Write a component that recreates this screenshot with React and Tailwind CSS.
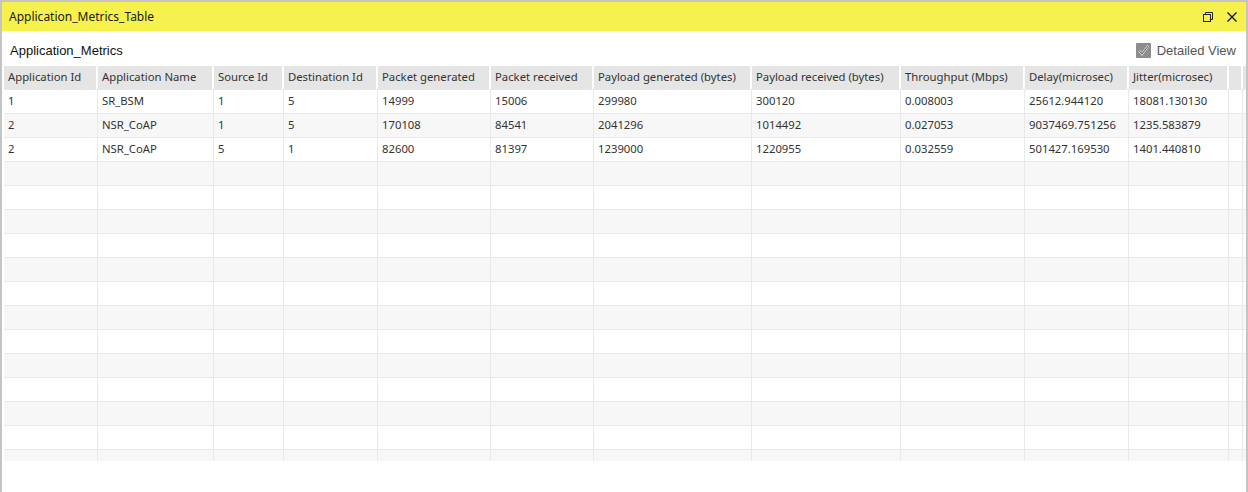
import React from 'react';

const columns = [
  { key: 'appId', label: 'Application Id', width: 94 },
  { key: 'appName', label: 'Application Name', width: 116 },
  { key: 'src', label: 'Source Id', width: 70 },
  { key: 'dst', label: 'Destination Id', width: 94 },
  { key: 'pktGen', label: 'Packet generated', width: 113 },
  { key: 'pktRecv', label: 'Packet received', width: 103 },
  { key: 'payGen', label: 'Payload generated (bytes)', width: 158 },
  { key: 'payRecv', label: 'Payload received (bytes)', width: 149 },
  { key: 'thr', label: 'Throughput (Mbps)', width: 124 },
  { key: 'delay', label: 'Delay(microsec)', width: 104 },
  { key: 'jitter', label: 'Jitter(microsec)', width: 100 },
  { key: 'filler', label: '', width: 14 },
];

const rows = [
  { appId: '1', appName: 'SR_BSM', src: '1', dst: '5', pktGen: '14999', pktRecv: '15006', payGen: '299980', payRecv: '300120', thr: '0.008003', delay: '25612.944120', jitter: '18081.130130' },
  { appId: '2', appName: 'NSR_CoAP', src: '1', dst: '5', pktGen: '170108', pktRecv: '84541', payGen: '2041296', payRecv: '1014492', thr: '0.027053', delay: '9037469.751256', jitter: '1235.583879' },
  { appId: '2', appName: 'NSR_CoAP', src: '5', dst: '1', pktGen: '82600', pktRecv: '81397', payGen: '1239000', payRecv: '1220955', thr: '0.032559', delay: '501427.169530', jitter: '1401.440810' },
];

const EMPTY_ROWS = 13;

const cellFont = { fontFamily: '"Noto Sans", "Segoe UI", sans-serif' };

const RestoreIcon = () => (
  <svg width="10" height="10" viewBox="0 0 10 10" fill="none" stroke="#222" strokeWidth="1">
    <rect x="0.5" y="2.5" width="7" height="7" />
    <path d="M2.5 2.5V0.5H9.5V7.5H7.5" />
  </svg>
);

const CloseIcon = () => (
  <svg width="10" height="10" viewBox="0 0 10 10" stroke="#111" strokeWidth="1.3">
    <path d="M0.5 0.5L9.5 9.5M9.5 0.5L0.5 9.5" />
  </svg>
);

const CheckBox = () => (
  <svg width="15" height="15" viewBox="0 0 15 15">
    <rect x="0" y="0" width="15" height="15" rx="1" fill="#8c8c8c" />
    <path d="M3 7.5L6 11L12.5 2.5" fill="none" stroke="#d9d9d9" strokeWidth="2.4" />
    <path d="M3 7.5L6 11L12.5 2.5" fill="none" stroke="#5a5a5a" strokeWidth="1" />
  </svg>
);

export default function App() {
  return (
    <div className="w-[1248px] h-[492px] bg-white border-t-2 border-x-2 border-[#c4c4c4] flex flex-col overflow-hidden">
      {/* title bar */}
      <div className="h-[29px] bg-[#f6f14c] flex items-center justify-between pl-[7px] pr-[9px] shrink-0">
        <span className="text-[12px] text-[#1a1a1a]" style={cellFont}>Application_Metrics_Table</span>
        <div className="flex items-center gap-[14px]">
          <RestoreIcon />
          <CloseIcon />
        </div>
      </div>

      {/* heading */}
      <div className="h-[35px] flex items-center justify-between pl-[8px] pr-[10px] pt-[4px] shrink-0" style={{ fontFamily: '"Liberation Sans", Arial, sans-serif' }}>
        <span className="text-[13px] text-[#111]">Application_Metrics</span>
        <label className="flex items-center gap-[6px] text-[13px] text-[#555]">
          <CheckBox />
          Detailed View
        </label>
      </div>

      {/* table */}
      <div className="pl-[2px] h-[395px] overflow-hidden shrink-0" style={cellFont}>
        <div className="flex h-[23px] bg-[#e5e5e5] text-[11.3px] text-[#333]">
          {columns.map((c) => (
            <div
              key={c.key}
              className="flex items-center pl-[4px] border-r-2 border-white whitespace-nowrap shrink-0"
              style={{ width: c.width }}
            >
              {c.label}
            </div>
          ))}
        </div>
        {[...rows, ...Array(EMPTY_ROWS).fill(null)].map((r, i) => (
          <div
            key={i}
            className={`flex h-[24px] border-t border-[#e9e9e9] text-[11.3px] text-[#333] ${i % 2 === 0 ? 'bg-white' : 'bg-[#f7f7f7]'}`}
          >
            {columns.map((c) => (
              <div
                key={c.key}
                className="flex items-center pl-[4px] border-r border-[#e9e9e9] whitespace-nowrap shrink-0"
                style={{ width: c.width }}
              >
                {r ? r[c.key] : ''}
              </div>
            ))}
          </div>
        ))}
      </div>
    </div>
  );
}
